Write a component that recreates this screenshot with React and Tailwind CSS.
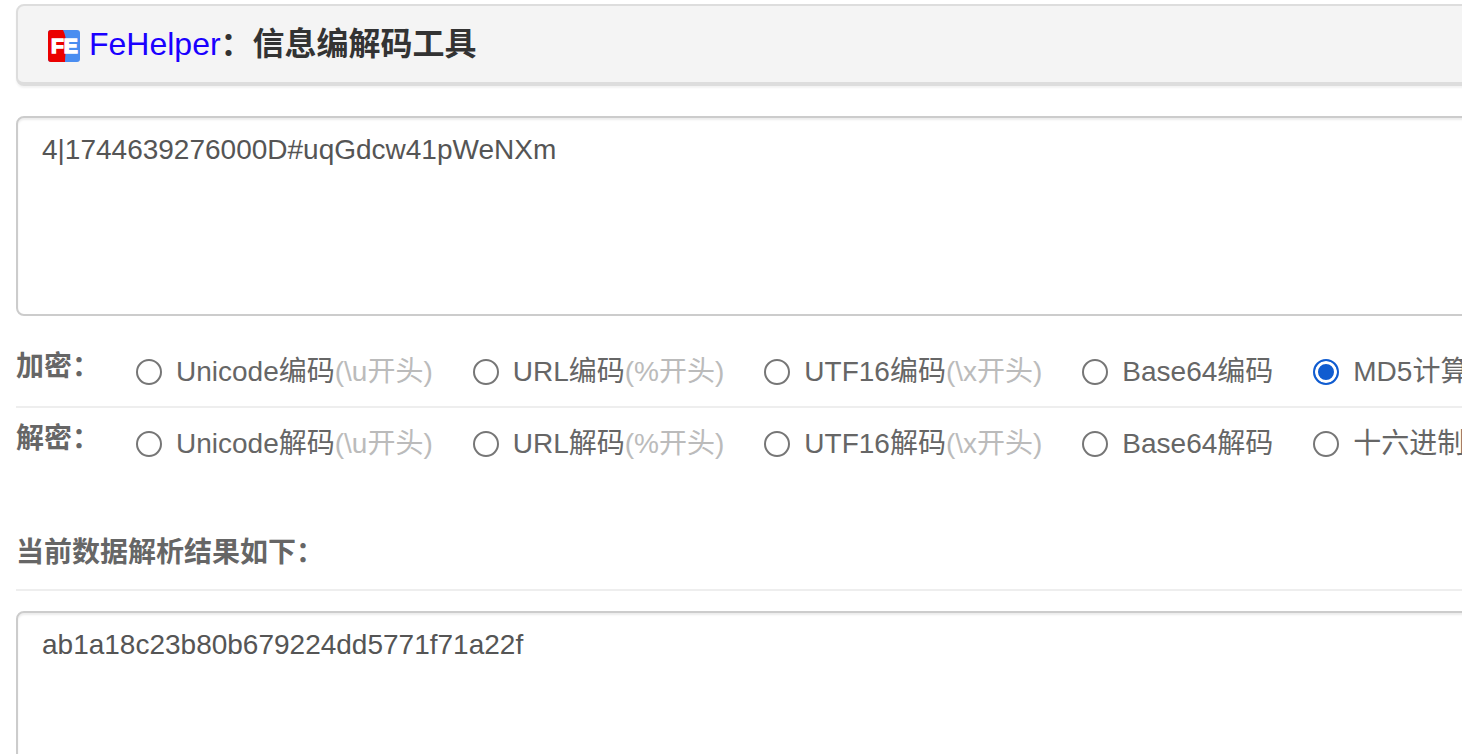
import { useState } from 'react'

const encoders = [
  { value: 'unicode-encode', label: 'Unicode编码', hint: '(\\u开头)' },
  { value: 'url-encode', label: 'URL编码', hint: '(%开头)' },
  { value: 'utf16-encode', label: 'UTF16编码', hint: '(\\x开头)' },
  { value: 'base64-encode', label: 'Base64编码' },
  { value: 'md5', label: 'MD5计算' },
]

const decoders = [
  { value: 'unicode-decode', label: 'Unicode解码', hint: '(\\u开头)' },
  { value: 'url-decode', label: 'URL解码', hint: '(%开头)' },
  { value: 'utf16-decode', label: 'UTF16解码', hint: '(\\x开头)' },
  { value: 'base64-decode', label: 'Base64解码' },
  { value: 'hex-decode', label: '十六进制' },
]

const boxClass =
  'block w-full resize-none rounded-lg border-2 border-[#cccccc] bg-white px-6 py-3 text-[28px] leading-10 text-[#555555] shadow-[inset_0_2px_2px_rgba(0,0,0,0.075)] outline-none'

function Logo() {
  return (
    <svg viewBox="0 0 32 32" className="mt-1 size-8 shrink-0" aria-hidden="true">
      <rect width="32" height="32" rx="3" fill="#4a8df0" />
      <path d="M3 0h12c2 4 3 8 3 13 0 7-1 13-1 19H3a3 3 0 0 1-3-3V3a3 3 0 0 1 3-3z" fill="#eb0000" />
      <text
        x="3"
        y="23"
        fontFamily="Liberation Sans, sans-serif"
        fontSize="21"
        fontWeight="700"
        fill="#fff"
        stroke="#fff"
        strokeWidth="1.4"
      >
        FE
      </text>
    </svg>
  )
}

function OptionRow({ title, options, selected, onSelect, divider }) {
  return (
    <div
      role="radiogroup"
      aria-label={title}
      className={`flex h-[72px] items-center border-b-2 pt-0.5 whitespace-nowrap ${
        divider ? 'border-[#eeeeee]' : 'border-transparent'
      }`}
    >
      <span className="w-[120px] shrink-0 pb-2.5 font-bold">{title}：</span>
      <div className="flex gap-10">
        {options.map((option) => (
          <label key={option.value} className="flex shrink-0 items-center gap-[14px]">
            <input
              type="radio"
              name="codec"
              value={option.value}
              checked={selected === option.value}
              onChange={() => onSelect(option.value)}
              className="size-[26px] shrink-0 appearance-none rounded-full border-2 border-[#767676] bg-white checked:border-[#105cd0] checked:bg-[#105cd0] checked:shadow-[inset_0_0_0_3px_#ffffff]"
            />
            <span>
              {option.label}
              {option.hint && <span className="text-[#bbbbbb]">{option.hint}</span>}
            </span>
          </label>
        ))}
      </div>
    </div>
  )
}

export default function App() {
  const [source, setSource] = useState('4|1744639276000D#uqGdcw41pWeNXm')
  const [codec, setCodec] = useState('md5')

  return (
    <div className="h-screen overflow-hidden bg-white pt-1 pl-4 font-['Liberation_Sans','Noto_Sans_CJK_SC',sans-serif] text-[28px] leading-10 text-[#666666]">
      <header className="-mr-4 flex items-center gap-[9px] rounded-lg border-2 border-b-4 border-[#dddddd] bg-[#f4f4f4] px-[30px] py-[18px] text-[32px] text-[#333333] shadow-[0_2px_2px_rgba(0,0,0,0.05)]">
        <Logo />
        <h1 className="font-bold whitespace-nowrap">
          <a href="#" className="font-normal text-[#1a00ff]">
            FeHelper
          </a>
          ：信息编解码工具
        </h1>
      </header>

      <main className="-mr-4">
        <textarea
          aria-label="信息编解码工具"
          spellCheck={false}
          value={source}
          onChange={(e) => setSource(e.target.value)}
          className={`${boxClass} mt-[30px] h-[200px]`}
        />

        <section className="mt-5">
          <OptionRow title="加密" options={encoders} selected={codec} onSelect={setCodec} divider />
          <OptionRow title="解密" options={decoders} selected={codec} onSelect={setCodec} />
        </section>

        <h2 className="mt-[53px] border-b-2 border-[#eeeeee] pb-4 font-bold">
          当前数据解析结果如下：
        </h2>
        <textarea
          aria-label="当前数据解析结果如下"
          readOnly
          spellCheck={false}
          value="ab1a18c23b80b679224dd5771f71a22f"
          className={`${boxClass} mt-5 h-[300px]`}
        />
      </main>
    </div>
  )
}
